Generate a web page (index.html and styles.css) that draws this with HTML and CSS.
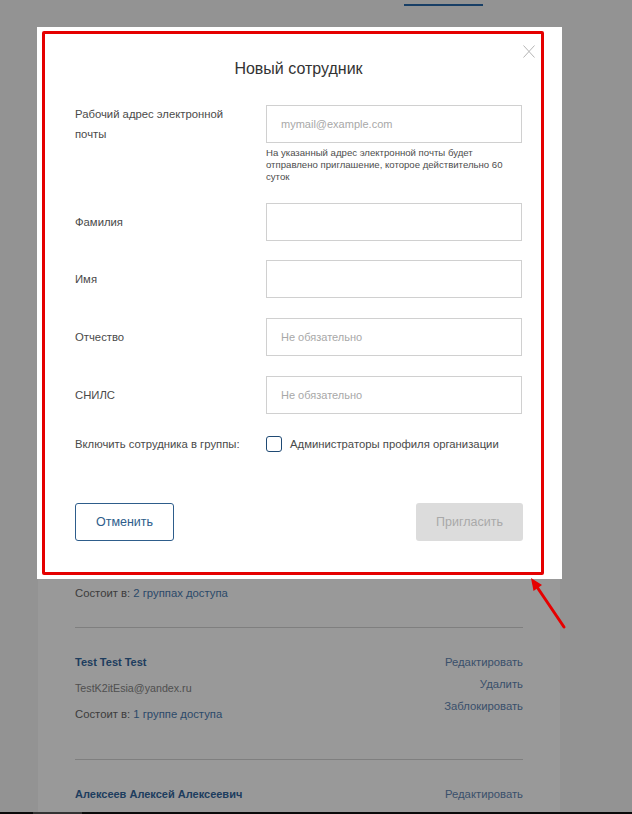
FILE: index.html
```html
<!DOCTYPE html>
<html lang="ru">
<head>
    <meta charset="UTF-8">
    <meta name="viewport" content="width=device-width, initial-scale=1.0">
    <title>Сотрудники организации</title>
    <link rel="stylesheet" href="styles.css">
</head>
<body>
    <header class="top-nav">
        <a class="top-nav__tab" href="#"></a>
    </header>

    <div class="card">
        <div class="card__head"></div>

        <div class="user">
            <div class="user__info">
                <span class="user__groups">Состоит в: <a href="#">2 группах доступа</a></span>
            </div>
        </div>

        <div class="user user--tall">
            <div class="user__info">
                <a class="user__name" href="#">Test Test Test</a>
                <span class="user__email">TestK2itEsia@yandex.ru</span>
                <span class="user__groups">Состоит в: <a href="#">1 группе доступа</a></span>
            </div>
            <div class="user__actions">
                <a href="#">Редактировать</a>
                <a href="#">Удалить</a>
                <a href="#">Заблокировать</a>
            </div>
        </div>

        <div class="user user--last">
            <div class="user__info">
                <a class="user__name" href="#">Алексеев Алексей Алексеевич</a>
            </div>
            <div class="user__actions">
                <a href="#">Редактировать</a>
            </div>
        </div>
    </div>

    <footer class="page-footer">
        <span class="page-footer__tab"></span>
    </footer>

    <div class="overlay">
        <div class="modal">
            <button class="modal__close" type="button" aria-label="Закрыть">
                <svg width="12" height="13" viewBox="0 0 12 13">
                    <path d="M0.5 0.5 L11.5 12.5 M11.5 0.5 L0.5 12.5" stroke="#b5b5b5" stroke-width="1" fill="none"/>
                </svg>
            </button>

            <h1 class="modal__title">Новый сотрудник</h1>

            <form class="invite-form">
                <div class="field">
                    <label class="field__label" for="email">Рабочий адрес электронной почты</label>
                    <input class="field__input" type="email" id="email" placeholder="mymail@example.com">
                    <p class="field__hint">На указанный адрес электронной почты будет отправлено приглашение, которое действительно 60 суток</p>
                </div>

                <div class="field">
                    <label class="field__label" for="lastname">Фамилия</label>
                    <input class="field__input" type="text" id="lastname">
                </div>

                <div class="field">
                    <label class="field__label" for="firstname">Имя</label>
                    <input class="field__input" type="text" id="firstname">
                </div>

                <div class="field">
                    <label class="field__label" for="middlename">Отчество</label>
                    <input class="field__input" type="text" id="middlename" placeholder="Не обязательно">
                </div>

                <div class="field">
                    <label class="field__label" for="snils">СНИЛС</label>
                    <input class="field__input" type="text" id="snils" placeholder="Не обязательно">
                </div>

                <div class="field field--check">
                    <span class="field__label">Включить сотрудника в группы:</span>
                    <label class="check">
                        <input class="check__box" type="checkbox">
                        <span>Администраторы профиля организации</span>
                    </label>
                </div>

                <div class="invite-form__actions">
                    <button class="btn btn--outline" type="button">Отменить</button>
                    <button class="btn btn--disabled" type="submit" disabled>Пригласить</button>
                </div>
            </form>

            <div class="mark-frame"></div>
        </div>

        <svg class="mark-arrow" width="45" height="60" viewBox="0 0 45 60">
            <line x1="39" y1="55" x2="12.7" y2="16" stroke="#e50000" stroke-width="3" stroke-linecap="round"/>
            <polygon points="6,6 17,13 8.5,19" fill="#e50000"/>
        </svg>
    </div>
</body>
</html>
```

FILE: styles.css
```css
body {
    font-family: "Liberation Sans", Arial, sans-serif;
    background-color: #f5f5f5;
    margin: 0;
    padding: 0;
    color: #4a4a4a;
}
a {
    text-decoration: none;
}

/* page under the dialog */
.top-nav {
    height: 40px;
    padding: 4px 0 0 404px;
}
.top-nav__tab {
    display: block;
    width: 79px;
    height: 2px;
    background-color: #2869aa;
}
.card {
    margin: 16px 0 0 38px;
    width: 522px;
    padding: 0 37px 8px;
    box-sizing: border-box;
    background-color: #fff;
}
.card__head {
    height: 499px;
}
.user {
    display: flex;
    justify-content: space-between;
    padding: 24px 0;
    border-bottom: 1px solid #d4d4d4;
    font-size: 11.3px;
    line-height: 20px;
}
.user--tall {
    padding-bottom: 35px;
}
.user--last {
    padding-bottom: 0;
    border-bottom: none;
}
.user__info {
    display: flex;
    flex-direction: column;
    gap: 6px;
}
.user__name {
    font-size: 11px;
    color: #32669d;
    font-weight: bold;
}
.user__email {
    font-size: 10.7px;
    color: #858585;
}
.user__groups {
    color: #666;
}
.user__groups a {
    color: #4a7bb1;
}
.user__actions {
    display: flex;
    flex-direction: column;
    align-items: flex-end;
    gap: 2px;
}
.user__actions a {
    color: #5f86b3;
}
.page-footer {
    height: 60px;
    background-color: #111;
    padding-left: 33px;
}
.page-footer__tab {
    display: block;
    width: 49px;
    height: 60px;
    background-color: #555;
}

/* dialog */
.overlay {
    position: fixed;
    top: 0;
    left: 0;
    right: 0;
    bottom: 0;
    background-color: rgba(0, 0, 0, 0.4);
    padding: 27px 0 0 37px;
}
.modal {
    position: relative;
    width: 525px;
    padding: 32px 40px 38px 38px;
    box-sizing: border-box;
    background-color: #fff;
}
.modal__close {
    position: absolute;
    top: 18px;
    right: 27px;
    width: 12px;
    height: 13px;
    padding: 0;
    border: none;
    background: none;
    cursor: pointer;
}
.modal__close svg {
    display: block;
}
.modal__title {
    margin: 0;
    font-size: 16px;
    line-height: 20px;
    font-weight: normal;
    text-align: center;
    color: #333;
}
.invite-form {
    display: flex;
    flex-direction: column;
    gap: 19.7px;
    margin-top: 25px;
}
.field {
    display: grid;
    grid-template-columns: 191px 1fr;
    align-items: center;
}
.field__label {
    padding-right: 16px;
    font-size: 11.3px;
    line-height: 20px;
    color: #4a4a4a;
}
.field__input {
    height: 38px;
    width: 100%;
    box-sizing: border-box;
    padding: 0 14px;
    border: 1px solid #d0d0d0;
    border-radius: 0;
    font-family: inherit;
    font-size: 11px;
    color: #333;
}
.field__input::placeholder {
    color: #a8a8a8;
}
.field__hint {
    grid-column: 2;
    margin: 3px 0 0;
    font-size: 9.6px;
    line-height: 12px;
    color: #4d4d4d;
}
.field--check {
    height: 16px;
    margin-top: 1px;
}
.check {
    display: flex;
    align-items: center;
    gap: 8px;
    font-size: 11.3px;
    color: #4a4a4a;
}
.check__box {
    appearance: none;
    width: 16px;
    height: 16px;
    margin: 0;
    border: 1.5px solid #1f4a74;
    border-radius: 3px;
    background: #fff;
}
.invite-form__actions {
    display: flex;
    justify-content: space-between;
    margin-top: 33px;
}
.btn {
    height: 38px;
    border-radius: 3px;
    font-family: inherit;
    font-size: 12.5px;
}
.btn--outline {
    width: 99px;
    border: 1px solid #2e5d8b;
    background-color: #fff;
    color: #2e5d8b;
    cursor: pointer;
}
.btn--disabled {
    width: 107px;
    margin-right: -1px;
    border: none;
    background-color: #dcdcdc;
    color: #a9a9a9;
}

/* red annotation over the screenshot */
.mark-frame {
    position: absolute;
    left: 5px;
    top: 4px;
    width: 502px;
    height: 544px;
    box-sizing: border-box;
    border: 3px solid #e50000;
    border-radius: 2px;
    pointer-events: none;
}
.mark-arrow {
    position: absolute;
    left: 525px;
    top: 572px;
}
```
